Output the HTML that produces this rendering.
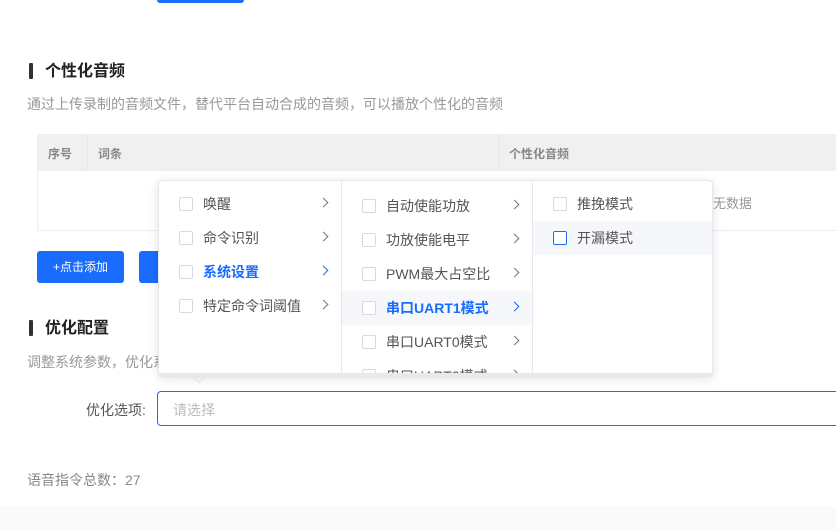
<!DOCTYPE html>
<html><head><meta charset="utf-8"><style>
*{margin:0;padding:0;box-sizing:border-box}
body{width:836px;height:530px;overflow:hidden;background:#fff;font-family:"Liberation Sans","Noto Sans CJK SC",sans-serif;position:relative;color:#333}
.abs{position:absolute}
.bar{position:absolute;width:4px;height:16px;background:#333;border-radius:1px}
.title{position:absolute;font-size:16px;font-weight:bold;color:#222;line-height:20px}
.desc{position:absolute;font-size:14px;color:#999;line-height:16px;white-space:nowrap}
.btn{position:absolute;background:#1a6cff;color:#fff;font-size:12px;border-radius:3px;text-align:center;line-height:32px;height:32px}
.dd{position:absolute;left:158px;top:180px;width:555px;height:197px;background:#fff;border:1px solid #e4e7ed;border-radius:4px;box-shadow:0 2px 10px rgba(0,0,0,.12);overflow:hidden}
.col{position:absolute;top:0;height:197px;border-right:1px solid #e4e7ed;overflow:hidden}
.it{position:absolute;left:0;right:0;height:34px;font-size:14px;color:#555;line-height:34px;white-space:nowrap}
.it .cb{position:absolute;left:20px;top:10px;width:14px;height:14px;border:1px solid #d7dae2;border-radius:2px;background:#fff}
.it .t{position:absolute;left:44px}
.it .ar{position:absolute;right:14px;top:12px;width:7px;height:7px;border-right:1px solid #777;border-top:1px solid #777;transform:rotate(45deg)}
.act{color:#1a6cff;font-weight:bold}
.act .ar{border-color:#1a6cff}
.hl{background:#f5f7fa}
</style></head><body>
<div class="abs" style="left:157px;top:0;width:87px;height:3px;background:#1a6cff;border-radius:0 0 3px 3px"></div>

<div class="bar" style="left:29px;top:63px"></div>
<div class="title" style="left:45px;top:62px">个性化音频</div>
<div class="desc" style="left:27px;top:96px">通过上传录制的音频文件，替代平台自动合成的音频，可以播放个性化的音频</div>

<div class="abs" style="left:37px;top:134px;width:799px;height:97px;border:1px solid #ebeef5;border-right:none"></div>
<div class="abs" style="left:38px;top:135px;width:798px;height:36px;background:#f0f0f0"></div>
<div class="abs" style="left:87px;top:135px;width:1px;height:36px;background:#e6e6e6"></div>
<div class="abs" style="left:499px;top:135px;width:1px;height:36px;background:#e6e6e6"></div>
<div class="abs" style="left:48px;top:145px;font-size:12px;font-weight:bold;color:#888">序号</div>
<div class="abs" style="left:98px;top:145px;font-size:12px;font-weight:bold;color:#888">词条</div>
<div class="abs" style="left:509px;top:145px;font-size:12px;font-weight:bold;color:#888">个性化音频</div>
<div class="abs" style="left:700px;top:193px;font-size:13px;color:#999">暂无数据</div>

<div class="btn" style="left:37px;top:251px;width:87px">+点击添加</div>
<div class="btn" style="left:139px;top:251px;width:87px">删除</div>

<div class="bar" style="left:29px;top:320px"></div>
<div class="title" style="left:45px;top:319px">优化配置</div>
<div class="desc" style="left:27px;top:354px">调整系统参数，优化系统性能</div>

<div class="abs" style="left:86px;top:400px;font-size:14px;color:#555">优化选项:</div>
<div class="abs" style="left:157px;top:391px;width:690px;height:35px;border:1px solid #1a6cff;border-radius:4px"></div>
<div class="abs" style="left:173px;top:400px;font-size:14px;color:#bbb">请选择</div>

<div class="abs" style="left:27px;top:470px;font-size:14px;color:#888">语音指令总数：27</div>
<div class="abs" style="left:0;top:507px;width:836px;height:23px;background:#fafafa"></div>

<div class="abs" style="left:193px;top:376px;width:0;height:0;border-left:6px solid transparent;border-right:6px solid transparent;border-top:6px solid #fff;filter:drop-shadow(0 1px 0 #e4e7ed)"></div>
<div class="dd">
 <div class="col" style="left:0;width:183px">
  <div class="it" style="top:6px"><span class="cb"></span><span class="t">唤醒</span><span class="ar"></span></div>
  <div class="it" style="top:40px"><span class="cb"></span><span class="t">命令识别</span><span class="ar"></span></div>
  <div class="it act" style="top:74px"><span class="cb"></span><span class="t">系统设置</span><span class="ar"></span></div>
  <div class="it" style="top:108px"><span class="cb"></span><span class="t">特定命令词阈值</span><span class="ar"></span></div>
 </div>
 <div class="col" style="left:183px;width:191px">
  <div class="it" style="top:8px"><span class="cb"></span><span class="t">自动使能功放</span><span class="ar"></span></div>
  <div class="it" style="top:42px"><span class="cb"></span><span class="t">功放使能电平</span><span class="ar"></span></div>
  <div class="it" style="top:76px"><span class="cb"></span><span class="t">PWM最大占空比</span><span class="ar"></span></div>
  <div class="it act hl" style="top:110px"><span class="cb"></span><span class="t">串口UART1模式</span><span class="ar"></span></div>
  <div class="it" style="top:144px"><span class="cb"></span><span class="t">串口UART0模式</span><span class="ar"></span></div>
  <div class="it" style="top:178px"><span class="cb"></span><span class="t">串口UART2模式</span><span class="ar"></span></div>
 </div>
 <div class="col" style="left:374px;width:181px;border-right:none">
  <div class="it" style="top:6px"><span class="cb"></span><span class="t">推挽模式</span></div>
  <div class="it hl" style="top:40px"><span class="cb" style="border-color:#1a6cff"></span><span class="t">开漏模式</span></div>
 </div>
 <div class="abs" style="left:0;bottom:0;width:555px;height:3px;background:#e8e9ec"></div>
</div>
</body></html>
